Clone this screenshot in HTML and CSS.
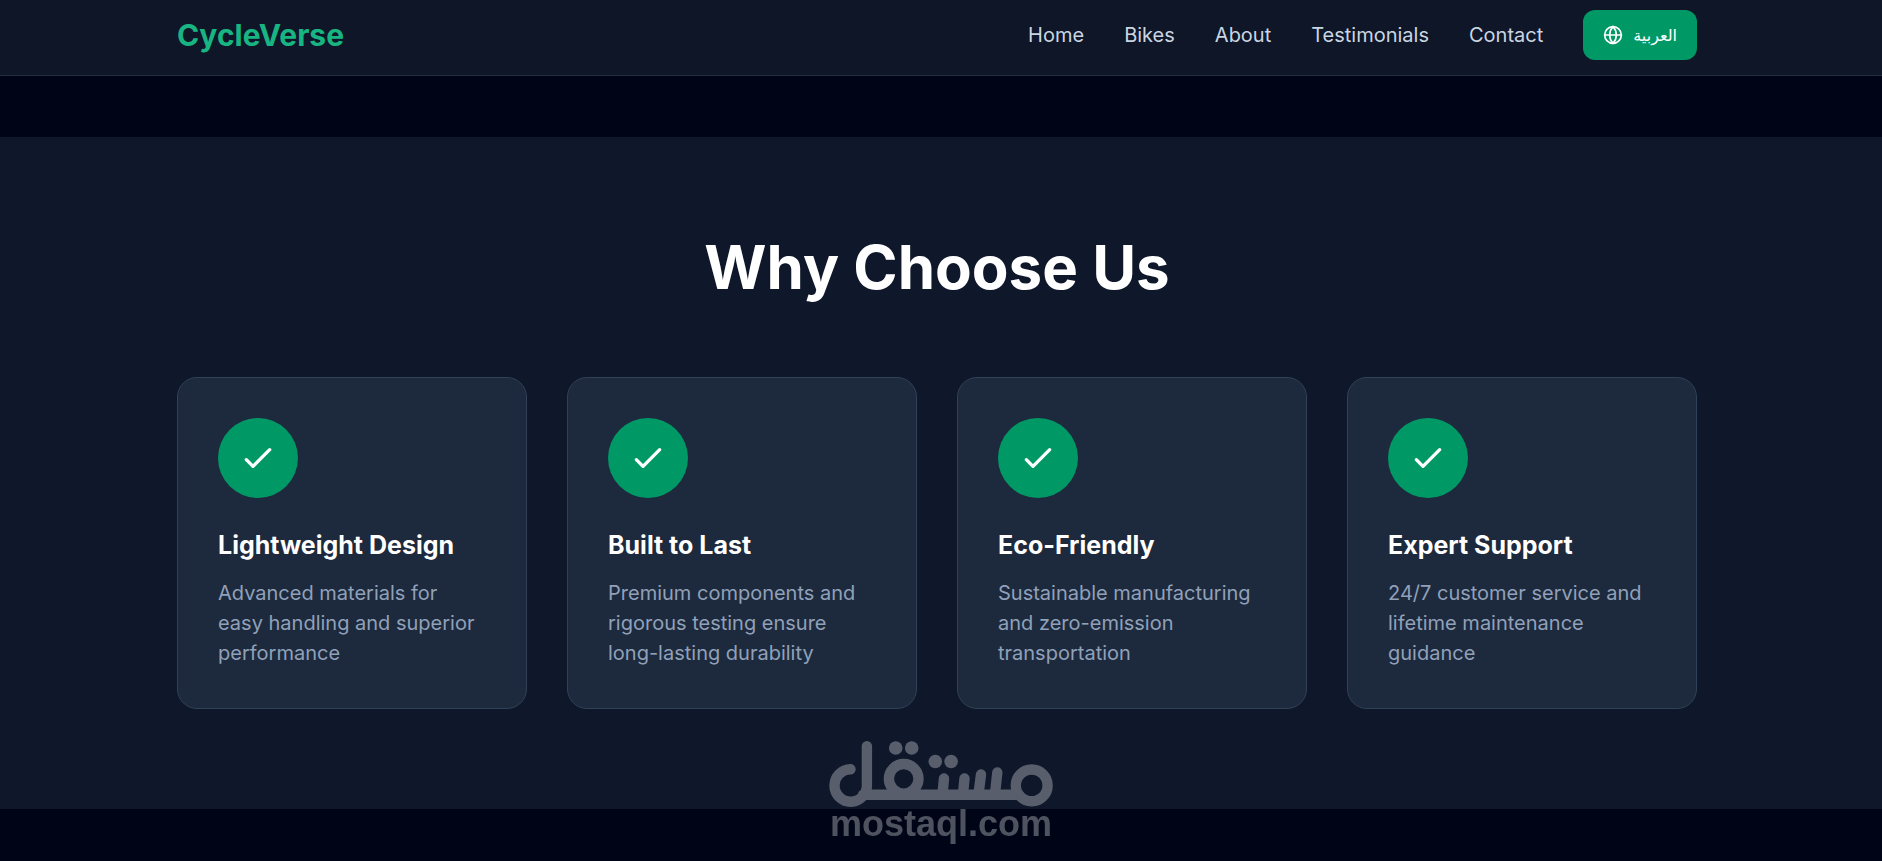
FILE: index.html
```html
<!DOCTYPE html>
<html lang="en">
<head>
    <meta charset="UTF-8">
    <meta name="viewport" content="width=device-width, initial-scale=1.0">
    <title>CycleVerse</title>
    <link rel="stylesheet" href="styles.css">
</head>
<body>
    <!-- Navbar -->
    <header class="navbar">
        <div class="container navbar-inner">
            <a href="#" class="brand">CycleVerse</a>
            <nav class="nav-links">
                <a href="#home">Home</a>
                <a href="#bikes">Bikes</a>
                <a href="#about">About</a>
                <a href="#testimonials">Testimonials</a>
                <a href="#contact">Contact</a>
                <button type="button" class="lang-btn">
                    <svg class="lang-icon" viewBox="0 0 24 24" fill="none" stroke="currentColor" stroke-width="2" stroke-linecap="round" stroke-linejoin="round" aria-hidden="true">
                        <circle cx="12" cy="12" r="10"/>
                        <path d="M12 2a14.5 14.5 0 0 0 0 20 14.5 14.5 0 0 0 0-20"/>
                        <path d="M2 12h20"/>
                    </svg>
                    <span lang="ar">العربية</span>
                </button>
            </nav>
        </div>
    </header>

    <!-- Why Choose Us -->
    <main>
        <section class="features" id="about">
            <div class="container">
                <h2 class="section-title">Why Choose Us</h2>
                <div class="feature-grid">
                    <article class="card">
                        <div class="card-icon">
                            <svg viewBox="0 0 24 24" aria-hidden="true"><path d="M5 13l4 4L19 7"/></svg>
                        </div>
                        <h3>Lightweight Design</h3>
                        <p>Advanced materials for easy handling and superior performance</p>
                    </article>
                    <article class="card">
                        <div class="card-icon">
                            <svg viewBox="0 0 24 24" aria-hidden="true"><path d="M5 13l4 4L19 7"/></svg>
                        </div>
                        <h3>Built to Last</h3>
                        <p>Premium components and rigorous testing ensure long-lasting durability</p>
                    </article>
                    <article class="card">
                        <div class="card-icon">
                            <svg viewBox="0 0 24 24" aria-hidden="true"><path d="M5 13l4 4L19 7"/></svg>
                        </div>
                        <h3>Eco-Friendly</h3>
                        <p>Sustainable manufacturing and zero-emission transportation</p>
                    </article>
                    <article class="card">
                        <div class="card-icon">
                            <svg viewBox="0 0 24 24" aria-hidden="true"><path d="M5 13l4 4L19 7"/></svg>
                        </div>
                        <h3>Expert Support</h3>
                        <p>24/7 customer service and lifetime maintenance guidance</p>
                    </article>
                </div>
            </div>
        </section>
    </main>

    <!-- Watermark -->
    <div class="watermark">
        <svg class="watermark-logo" viewBox="0 0 224 66" fill="none" stroke="currentColor" stroke-width="10.4" stroke-linecap="round" stroke-linejoin="round" aria-hidden="true">
            <path d="M21.5 28.3A16.2 16.2 0 1 0 37.9 44.5V5.2M34 53.8H190"/>
            <circle cx="74.7" cy="37.8" r="14.8"/>
            <circle cx="202.7" cy="44.4" r="15.9"/>
            <path d="M115 37.5L113.5 53M135.5 37.5L134 53M152 33.5L149.5 53M168.3 31.5L166 53"/>
            <g fill="currentColor" stroke="none">
                <circle cx="66.7" cy="7" r="6.8"/>
                <circle cx="82.7" cy="7" r="6.8"/>
                <circle cx="106.3" cy="20.5" r="6.8"/>
                <circle cx="122.1" cy="20.5" r="6.8"/>
            </g>
        </svg>
        <span class="watermark-text">mostaql.com</span>
    </div>
</body>
</html>
```
FILE: styles.css
```css
/* General Styling */
* {
    margin: 0;
    padding: 0;
    box-sizing: border-box;
}

body {
    background: #000417;
    color: white;
    font-family: Inter, "DejaVu Sans", sans-serif;
    font-size: 20px;
    line-height: 30px;
    padding-top: 137px;
    overflow-x: hidden;
}

a {
    color: inherit;
    text-decoration: none;
}

.navbar,
.features {
    padding-right: 8px;
}

.container {
    max-width: 1600px;
    margin: 0 auto;
    padding: 0 40px;
}

/* Navbar */
.navbar {
    position: fixed;
    top: 0;
    left: 0;
    right: 0;
    background: #0e1628;
    border-bottom: 1px solid #212d3d;
}

.navbar-inner {
    display: flex;
    justify-content: space-between;
    align-items: center;
    padding-top: 10px;
    padding-bottom: 15px;
}

.brand {
    color: #18b583;
    font-size: 30px;
    font-weight: 700;
}

.nav-links {
    display: flex;
    align-items: center;
    gap: 40px;
    color: #cad5e2;
}

.nav-links a:hover {
    color: #18b583;
}

.lang-btn {
    display: flex;
    align-items: center;
    gap: 10px;
    height: 50px;
    padding: 0 20px;
    background: #009966;
    color: white;
    border: none;
    border-radius: 12px;
    font: inherit;
    font-size: 16px;
    cursor: pointer;
}

.lang-btn:hover {
    background: #007a55;
}

.lang-icon {
    width: 20px;
    height: 20px;
}

/* Features */
.features {
    background: #0f172a;
    padding-top: 100px;
    padding-bottom: 100px;
    margin-bottom: 50px;
}

.section-title {
    font-size: 60px;
    line-height: 60px;
    font-weight: 700;
    text-align: center;
    margin-bottom: 80px;
}

.feature-grid {
    display: grid;
    grid-template-columns: repeat(4, 1fr);
    gap: 40px;
}

.card {
    background: #1d293d;
    border: 1px solid #314158;
    border-radius: 20px;
    padding: 40px;
}

.card-icon {
    display: flex;
    justify-content: center;
    align-items: center;
    width: 80px;
    height: 80px;
    margin-bottom: 30px;
    background: #009966;
    border-radius: 50%;
}

.card-icon svg {
    width: 40px;
    height: 40px;
    fill: none;
    stroke: white;
    stroke-width: 2;
    stroke-linecap: round;
    stroke-linejoin: round;
}

.card h3 {
    font-size: 25px;
    line-height: 35px;
    font-weight: 700;
    margin-bottom: 15px;
}

.card p {
    color: #90a1b9;
}

/* Watermark */
.watermark {
    position: fixed;
    left: 0;
    right: 0;
    bottom: 20px;
    display: flex;
    flex-direction: column;
    align-items: center;
    color: #dadddf;
    opacity: 0.36;
    pointer-events: none;
}

.watermark-logo {
    width: 224px;
    height: 66px;
}

.watermark-text {
    font-family: "Liberation Sans", Arial, sans-serif;
    font-size: 36px;
    line-height: 34px;
    font-weight: 700;
}
```
